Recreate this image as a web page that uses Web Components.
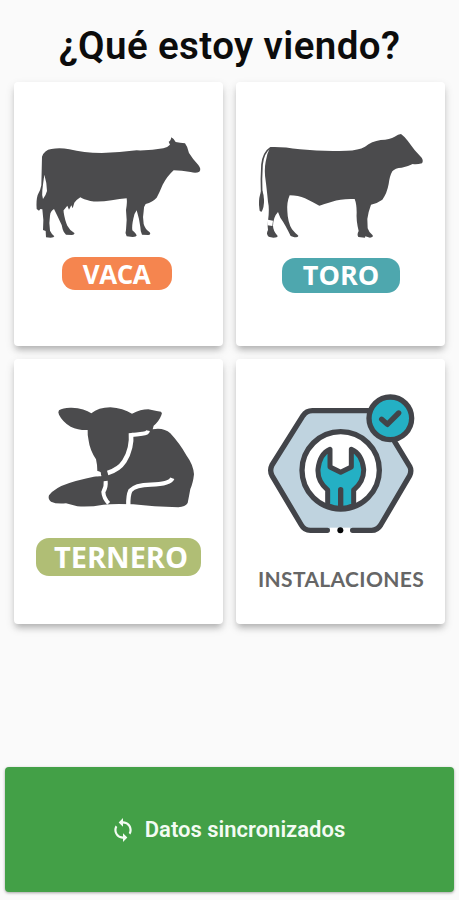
<!DOCTYPE html>
<html lang="es">
<head>
<meta charset="UTF-8">
<meta name="viewport" content="width=device-width, initial-scale=1.0">
<title>¿Qué estoy viendo?</title>
<style>
  body {
    margin: 0;
    background-color: #fafafa;
    font-family: Roboto, "Liberation Sans", sans-serif;
  }
</style>
</head>
<body>
<main-screen></main-screen>

<script>
// Etiqueta de color debajo de cada dibujo
class AnimalLabel extends HTMLElement {
  constructor() {
    super();
    this.attachShadow({ mode: 'open' });
    this.shadowRoot.innerHTML = `
      <style>
        :host {
          display: flex;
          align-items: center;
          justify-content: center;
          box-sizing: border-box;
          flex: none;
          border-radius: 13px;
          color: #fff;
          font-family: "Open Sans", "Noto Sans", sans-serif;
          font-weight: 700;
          line-height: 1;
          white-space: nowrap;
        }
      </style>
      <slot></slot>
    `;
  }
}

// Tarjeta blanca con dibujo y etiqueta
class OptionCard extends HTMLElement {
  constructor() {
    super();
    this.attachShadow({ mode: 'open' });
    this.shadowRoot.innerHTML = `
      <style>
        :host {
          display: flex;
          flex-direction: column;
          align-items: flex-start;
          box-sizing: border-box;
          background-color: #fff;
          border-radius: 4px;
          box-shadow: 0 5px 6px -2px rgba(0, 0, 0, 0.2), 0 4px 10px rgba(0, 0, 0, 0.14);
          cursor: pointer;
        }
      </style>
      <slot name="picture"></slot>
      <slot></slot>
    `;
  }
}

class CowPicture extends HTMLElement {
  constructor() {
    super();
    this.attachShadow({ mode: 'open' });
    this.shadowRoot.innerHTML = `
      <style>
        :host { display: block; }
        svg { display: block; }
      </style>
      <svg width="180" height="115" viewBox="0 0 540 345" fill="#4b4b4d">
        <path fill-rule="evenodd" d="M36 80 Q43 60 64 57 Q90 52 118 58 Q160 69 215 69 Q270 68 320 61 Q365 62 400 55
          Q414 51 420 44 L416 35 Q422 34 424 22 Q433 27 437 36 Q450 39 465 40 Q473 50 477 69 Q488 87 505 105
          Q515 118 508 125 Q498 131 482 126 Q455 121 431 121 Q412 138 398 164 Q389 186 380 203 Q368 216 347 222
          Q340 230 341 244 Q337 262 341 282 Q345 297 359 307 Q364 314 355 315 L336 314 Q331 303 331 291
          Q328 267 320 241 Q311 253 310 266 Q305 288 307 301 Q317 309 320 316 Q319 321 308 321 L290 319
          Q284 309 288 300 Q292 270 288 240 Q292 218 290 205 Q270 207 245 211 Q205 217 181 213 Q160 208 151 202
          Q140 209 133 218 L128 235 L124 226 L117 239 L112 227 L104 237 Q99 240 101 247 Q105 273 112 287
          Q120 302 133 309 Q135 314 125 315 L108 314 Q101 309 98 298 L95 285 Q82 257 72 237 Q61 244 60 257
          Q56 280 60 302 Q66 314 73 319 Q72 323 62 323 L48 322 L47 303 L39 300 Q42 270 37 238
          L31 237 L27 242 L20 237 Q18 211 23 195 Q32 180 34 166 Q35 123 36 80 Z
          M43 134 Q39 161 37 181 Q35 197 39 207 Q48 195 51 183 Q51 160 43 134 Z"/>
      </svg>
    `;
  }
}

class BullPicture extends HTMLElement {
  constructor() {
    super();
    this.attachShadow({ mode: 'open' });
    this.shadowRoot.innerHTML = `
      <style>
        :host { display: block; }
        svg { display: block; }
      </style>
      <svg width="180" height="120" viewBox="0 0 540 360" fill="#4b4b4d">
        <path d="M61 66 Q95 64 150 73 Q220 80 290 77 Q325 76 345 65 Q365 49 392 45 Q420 44 434 35 Q445 27 453 27
          Q465 36 473 47 Q492 75 515 98 Q521 107 516 115 Q500 119 488 117 Q473 125 455 128 Q435 129 427 139
          Q419 153 416 177 Q411 205 397 224 Q382 235 363 239 Q355 260 352 282 L353 310 Q357 323 368 331
          Q371 337 360 338 L346 334 L345 338 L325 336 Q320 329 326 318 Q318 286 320 262 Q320 237 314 222
          Q275 220 246 230 Q220 237 208 242 Q185 230 165 220 Q145 211 119 211 Q110 232 112 258 Q113 292 126 313
          Q138 327 145 332 Q145 337 133 337 L122 333 Q106 299 91 278 L84 261 Q70 276 69 302 Q69 317 83 333
          Q83 338 70 338 L56 335 Q47 328 54 315 Q52 302 54 288 Q59 252 54 230 Q50 190 47 167 Q42 135 47 110
          Q50 87 61 66 Z"/>
        <path d="M62 68 Q40 82 36 119 Q33 165 35 204" fill="none" stroke="#4b4b4d" stroke-width="5"/>
        <path d="M34 197 Q26 216 27 240 L29 257 L34 261 Q43 247 42 224 Q41 207 37 197 Z"/>
        <path d="M54 284 L69 287 L67 303 L53 301 Z" fill="#fff"/>
      </svg>
    `;
  }
}

class CalfPicture extends HTMLElement {
  constructor() {
    super();
    this.attachShadow({ mode: 'open' });
    this.shadowRoot.innerHTML = `
      <style>
        :host { display: block; }
        svg { display: block; }
      </style>
      <svg width="165" height="120" viewBox="0 0 495 360" fill="#4b4b4d">
        <path d="M57 46 Q70 37 95 38 Q134 40 154 55 Q175 37 211 37 Q249 40 276 56 Q302 43 325 43 L350 48
          L363 50 Q368 54 364 61 Q356 81 341 92 L338 103 Q371 97 391 115 Q418 144 440 182 Q460 209 462 238
          Q459 265 451 282 Q447 304 443 324 Q436 335 415 337 Q340 335 280 328 Q220 326 190 329 Q150 337 112 334
          L78 325 Q49 328 33 320 Q23 312 27 301 Q44 278 88 264 Q140 247 184 242 L181 231 L172 228
          Q172 209 168 193 Q149 163 146 137 Q142 121 143 105 Q115 106 92 95 Q68 81 57 59 Q53 51 57 46 Z"/>
        <g fill="none" stroke="#fff" stroke-linejoin="round">
          <path d="M324 107 Q322 116 307 116 Q289 119 274 120" stroke-width="12"/>
          <path d="M273 114 Q277 160 253 199 Q237 224 203 234" stroke-width="14"/>
          <path d="M197 258 Q199 276 190 291 Q191 309 206 325" stroke-width="12"/>
          <path d="M265 331 Q264 302 271 287 Q285 270 333 269 Q390 268 397 250" stroke-width="13"/>
        </g>
        <path d="M168 228 L181 231 L184 244 L170 244 Z" fill="#fff"/>
      </svg>
    `;
  }
}

class FacilityPicture extends HTMLElement {
  constructor() {
    super();
    this.attachShadow({ mode: 'open' });
    this.shadowRoot.innerHTML = `
      <style>
        :host { display: block; }
        svg { display: block; }
      </style>
      <svg width="165" height="150" viewBox="0 0 495 450" stroke="#424449" stroke-width="16"
           stroke-linecap="round" stroke-linejoin="round" fill="none">
        <path d="M325 62 H157 Q139 62 129 77 L36 225 Q28 241 36 257 L124 405 Q133 421 151 421 H335 Q352 421 362 405
          L449 257 Q456 242 449 229 L400 150 Z" fill="#bfd3df" stroke="none"/>
        <path d="M325 62 H157 Q139 62 129 77 L36 225 Q28 241 36 257 L124 405 Q133 421 151 421 H202"/>
        <path d="M278 421 H335 Q352 421 362 405 L449 257 Q456 242 449 229 L404 155"/>
        <path d="M210 413 H270 V430 H210 Z" fill="#fff" stroke="none"/>
        <circle cx="241" cy="421" r="9" fill="#050607" stroke="none"/>
        <circle cx="242" cy="241" r="116" fill="#fff"/>
        <path d="M203 347 V300 Q172 275 174 238 Q179 192 210 178 V231 L242 247 L274 231 V178
          Q306 192 311 238 Q312 275 281 300 V347 Q242 364 203 347 Z" fill="#24b0c4" stroke-width="15"/>
        <path d="M242 299 V350"/>
        <circle cx="391" cy="85" r="64" fill="#24b0c4"/>
        <path d="M365 88 L382 103 L416 69"/>
      </svg>
    `;
  }
}

// Botón inferior de sincronización
class SyncButton extends HTMLElement {
  constructor() {
    super();
    this.attachShadow({ mode: 'open' });
    this.shadowRoot.innerHTML = `
      <style>
        :host {
          display: flex;
          align-items: center;
          justify-content: center;
          box-sizing: border-box;
          height: 125px;
          padding-right: 4px;
          border-radius: 4px;
          background-color: #43a047;
          box-shadow: 0 1px 3px rgba(0, 0, 0, 0.35);
          color: #f3fbf3;
          font-size: 22px;
          font-weight: 600;
          line-height: 26px;
          cursor: pointer;
        }

        svg {
          margin-right: 9px;
        }
      </style>
      <svg width="26" height="26" viewBox="0 0 24 24" fill="currentColor">
        <path d="M12 4V1L8 5l4 4V6c3.31 0 6 2.69 6 6 0 1.01-.25 1.97-.7 2.8l1.46 1.46C19.54 15.03 20 13.57 20 12c0-4.42-3.58-8-8-8zm0 14c-3.31 0-6-2.69-6-6 0-1.01.25-1.97.7-2.8L5.24 7.74C4.46 8.97 4 10.43 4 12c0 4.42 3.58 8 8 8v3l4-4-4-4v3z"/>
      </svg>
      <slot></slot>
    `;
  }
}

// Pantalla completa
class MainScreen extends HTMLElement {
  constructor() {
    super();
    this.attachShadow({ mode: 'open' });
    this.shadowRoot.innerHTML = `
      <style>
        :host {
          display: flex;
          flex-direction: column;
          box-sizing: border-box;
          height: 900px;
          padding: 23px 5px 8px;
        }

        h1 {
          margin: 0;
          height: 59px;
          color: #0c0c0c;
          font-size: 38.5px;
          font-weight: 600;
          letter-spacing: 0.4px;
          line-height: 46px;
          text-align: center;
          white-space: nowrap;
        }

        .grid {
          display: grid;
          grid-template-columns: 209px 209px;
          grid-template-rows: 264px 265px;
          gap: 13px;
          padding-left: 9px;
        }

        .vaca cow-picture { margin: 48px 0 12px 16px; }
        .vaca animal-label {
          width: 110px;
          height: 33px;
          margin-left: 47.5px;
          background-color: #f5854f;
          font-size: 26px;
          letter-spacing: -0.5px;
        }

        .toro bull-picture { margin: 43px 0 13px 14px; }
        .toro animal-label {
          width: 118px;
          height: 35px;
          margin-left: 46px;
          padding-bottom: 2px;
          background-color: #4ea7ae;
          font-size: 27px;
        }

        .ternero calf-picture { margin: 36px 0 23px 26px; }
        .ternero animal-label {
          width: 165px;
          height: 38px;
          margin-left: 22px;
          padding: 0 0 2px 5px;
          background-color: #b0be75;
          font-size: 29px;
        }

        .instalaciones facility-picture { margin: 31px 0 26px 24px; }
        .instalaciones animal-label {
          width: 209px;
          height: 25px;
          padding-left: 1px;
          color: #666;
          font-family: Lato, "Open Sans", sans-serif;
          font-size: 21px;
          font-weight: 700;
          letter-spacing: 0.35px;
        }

        sync-button { margin-top: auto; }
      </style>

      <h1>¿Qué estoy viendo?</h1>
      <div class="grid">
        <option-card class="vaca">
          <cow-picture slot="picture"></cow-picture>
          <animal-label>VACA</animal-label>
        </option-card>
        <option-card class="toro">
          <bull-picture slot="picture"></bull-picture>
          <animal-label>TORO</animal-label>
        </option-card>
        <option-card class="ternero">
          <calf-picture slot="picture"></calf-picture>
          <animal-label>TERNERO</animal-label>
        </option-card>
        <option-card class="instalaciones">
          <facility-picture slot="picture"></facility-picture>
          <animal-label>INSTALACIONES</animal-label>
        </option-card>
      </div>
      <sync-button>Datos sincronizados</sync-button>
    `;
  }
}

// Registrar los componentes
customElements.define('animal-label', AnimalLabel);
customElements.define('option-card', OptionCard);
customElements.define('cow-picture', CowPicture);
customElements.define('bull-picture', BullPicture);
customElements.define('calf-picture', CalfPicture);
customElements.define('facility-picture', FacilityPicture);
customElements.define('sync-button', SyncButton);
customElements.define('main-screen', MainScreen);
</script>
</body>
</html>
